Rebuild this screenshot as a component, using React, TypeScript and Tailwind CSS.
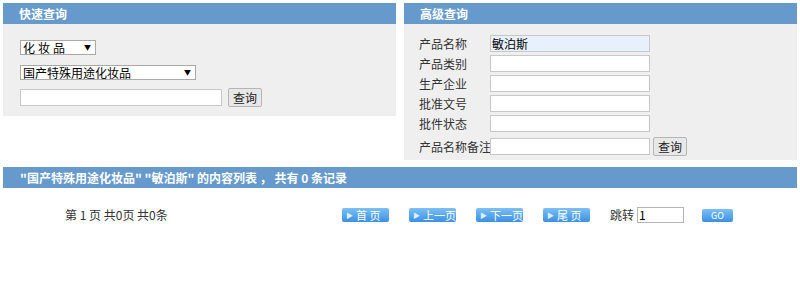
import React from 'react';

const labels = ['产品名称', '产品类别', '生产企业', '批准文号', '批件状态', '产品名称备注'];

function PageButton({ text }: { text: string }) {
  return (
    <div className="flex items-center w-[47px] h-[14px] rounded-[2px] bg-gradient-to-b from-[#7cc0f5] to-[#3a90e2] text-white text-[11px] leading-none">
      <span className="text-[7px] ml-[4px] mr-[3px] text-[#dcefff]">▶</span>
      <span>{text}</span>
    </div>
  );
}

export default function App() {
  return (
    <div className="bg-white w-[800px] h-[295px] text-[#333] font-['Noto_Sans_CJK_SC','Liberation_Sans',sans-serif]">
      <div className="flex items-start gap-[8px] px-[3px] pt-[3px]">
        {/* quick search */}
        <div className="w-[393px]">
          <div className="h-[21px] bg-[#6699cc] pl-[16px] text-white text-[12px] font-bold leading-[21px]">快速查询</div>
          <div className="h-[92px] bg-[#efefef] pl-[17px] pt-[16px]">
            <div className="flex items-center justify-between w-[76px] h-[15px] bg-white border border-[#a9a9a9] pl-[2px] pr-[4px] text-[12px] leading-none text-black">
              <span className="tracking-[3px]">化妆品</span>
              <span className="text-[7px]">▼</span>
            </div>
            <div className="flex items-center justify-between w-[176px] h-[15px] mt-[10px] bg-white border border-[#a9a9a9] pl-[2px] pr-[4px] text-[12px] leading-none text-black overflow-hidden">
              <span>国产特殊用途化妆品</span>
              <span className="text-[7px]">▼</span>
            </div>
            <div className="flex items-center gap-[6px] mt-[8px]">
              <div className="w-[202px] h-[17px] bg-white border border-[#c8c8c8]" />
              <div className="flex items-center justify-center w-[34px] h-[19px] bg-[#e8e8e8] border border-[#b5b5b5] rounded-[2px] text-[12px] text-[#222]">查询</div>
            </div>
          </div>
        </div>
        {/* advanced search */}
        <div className="w-[393px]">
          <div className="h-[21px] bg-[#6699cc] pl-[16px] text-white text-[12px] font-bold leading-[21px]">高级查询</div>
          <div className="h-[136px] bg-[#efefef] pl-[15px] pt-[11px]">
            {labels.map((l, i) => (
              <div key={l} className={`flex items-center ${i === 5 ? 'mt-[5px]' : i > 0 ? 'mt-[3px]' : ''}`}>
                <span className="w-[71px] text-[12px] leading-none text-[#333] whitespace-nowrap">{l}</span>
                <div className={`w-[160px] h-[17px] border border-[#c8c8c8] ${i === 0 ? 'bg-[#e8f0fe]' : 'bg-white'} text-[12px] leading-[15px] pl-[1px] text-black`}>
                  {i === 0 ? '敏泊斯' : ''}
                </div>
                {i === 5 && (
                  <div className="flex items-center justify-center ml-[3px] w-[34px] h-[19px] bg-[#e8e8e8] border border-[#b5b5b5] rounded-[2px] text-[12px] text-[#222]">查询</div>
                )}
              </div>
            ))}
          </div>
        </div>
      </div>
      <div className="mx-[3px] mt-[7px] h-[21px] bg-[#6699cc] pl-[17px] text-white text-[12px] font-bold leading-[21px]">
        "国产特殊用途化妆品" "敏泊斯" 的内容列表 ， 共有 0 条记录
      </div>
      <div className="flex items-center h-[14px] mt-[20px]">
        <span className="ml-[65px] w-[277px] text-[12px] leading-none text-[#333]">第 1 页 共0页 共0条</span>
        <div className="flex items-center gap-[20px]">
          <PageButton text="首 页" />
          <PageButton text="上一页" />
          <PageButton text="下一页" />
          <PageButton text="尾 页" />
        </div>
        <span className="ml-[20px] text-[12px] text-[#333]">跳转</span>
        <div className="ml-[3px] w-[47px] h-[16px] border border-[#b5b5b5] bg-white text-[12px] leading-[14px] pl-[1px] text-black">1</div>
        <div className="ml-[18px] flex items-center justify-center w-[31px] h-[13px] rounded-[2px] bg-gradient-to-b from-[#7cc0f5] to-[#3a90e2] text-white text-[9px] leading-none">GO</div>
      </div>
    </div>
  );
}
